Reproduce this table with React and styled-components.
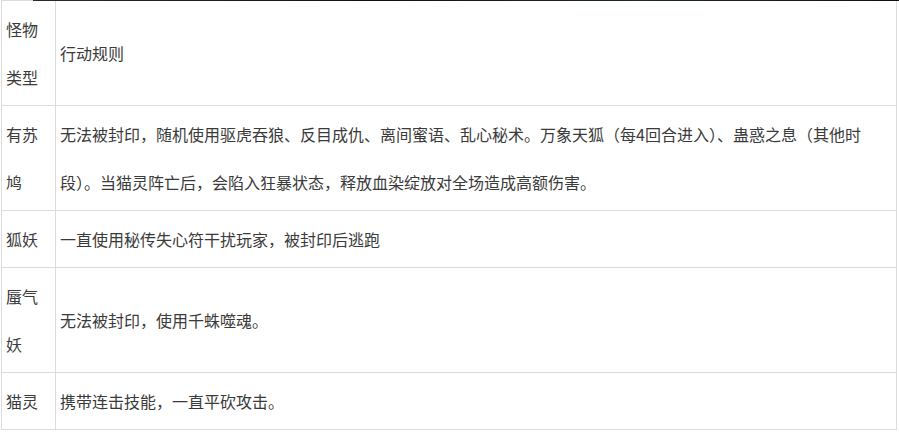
import React from "react";
import styled, { createGlobalStyle } from "styled-components";

const Global = createGlobalStyle`
  html, body { margin: 0; padding: 0; background: #fff; }
  body { font-family: "Microsoft YaHei", "Noto Sans CJK SC", "Noto Sans", sans-serif; }
`;

const Page = styled.div`
  position: relative;
  padding: 0 0 0 1px;
  width: 899px;
  box-sizing: border-box;
`;

const ImageEdge = styled.div`
  position: absolute;
  top: 0;
  left: 33px;
  right: 0;
  height: 1px;
  background: linear-gradient(90deg, #2a2a2a 0%, #111 40%, #1c2a2a 70%, #111 100%);
`;

const Table = styled.table`
  border-collapse: collapse;
  width: 896px;
  table-layout: fixed;
  color: #3a3a3a;
  font-size: 16px;
  line-height: 48px;
`;

const Cell = styled.td`
  border: 1px solid #dcdcdc;
  padding: 4px 5px 4px 4px;
  vertical-align: middle;
  word-break: break-all;
`;

const NameCell = styled(Cell)`
  padding-left: 4px;
`;

const rows = [
  ["有苏鸠", "无法被封印，随机使用驱虎吞狼、反目成仇、离间蜜语、乱心秘术。万象天狐（每4回合进入）、蛊惑之息（其他时段）。当猫灵阵亡后，会陷入狂暴状态，释放血染绽放对全场造成高额伤害。"],
  ["狐妖", "一直使用秘传失心符干扰玩家，被封印后逃跑"],
  ["蜃气妖", "无法被封印，使用千蛛噬魂。"],
  ["猫灵", "携带连击技能，一直平砍攻击。"],
];

export default function App() {
  return (
    <Page>
      <Global />
      <Table>
        <colgroup>
          <col style={{ width: "54px" }} />
          <col />
        </colgroup>
        <tbody>
          <tr>
            <NameCell>怪物类型</NameCell>
            <Cell>行动规则</Cell>
          </tr>
          {rows.map(([name, rule]) => (
            <tr key={name}>
              <NameCell>{name}</NameCell>
              <Cell>{rule}</Cell>
            </tr>
          ))}
        </tbody>
      </Table>
      <ImageEdge />
    </Page>
  );
}
